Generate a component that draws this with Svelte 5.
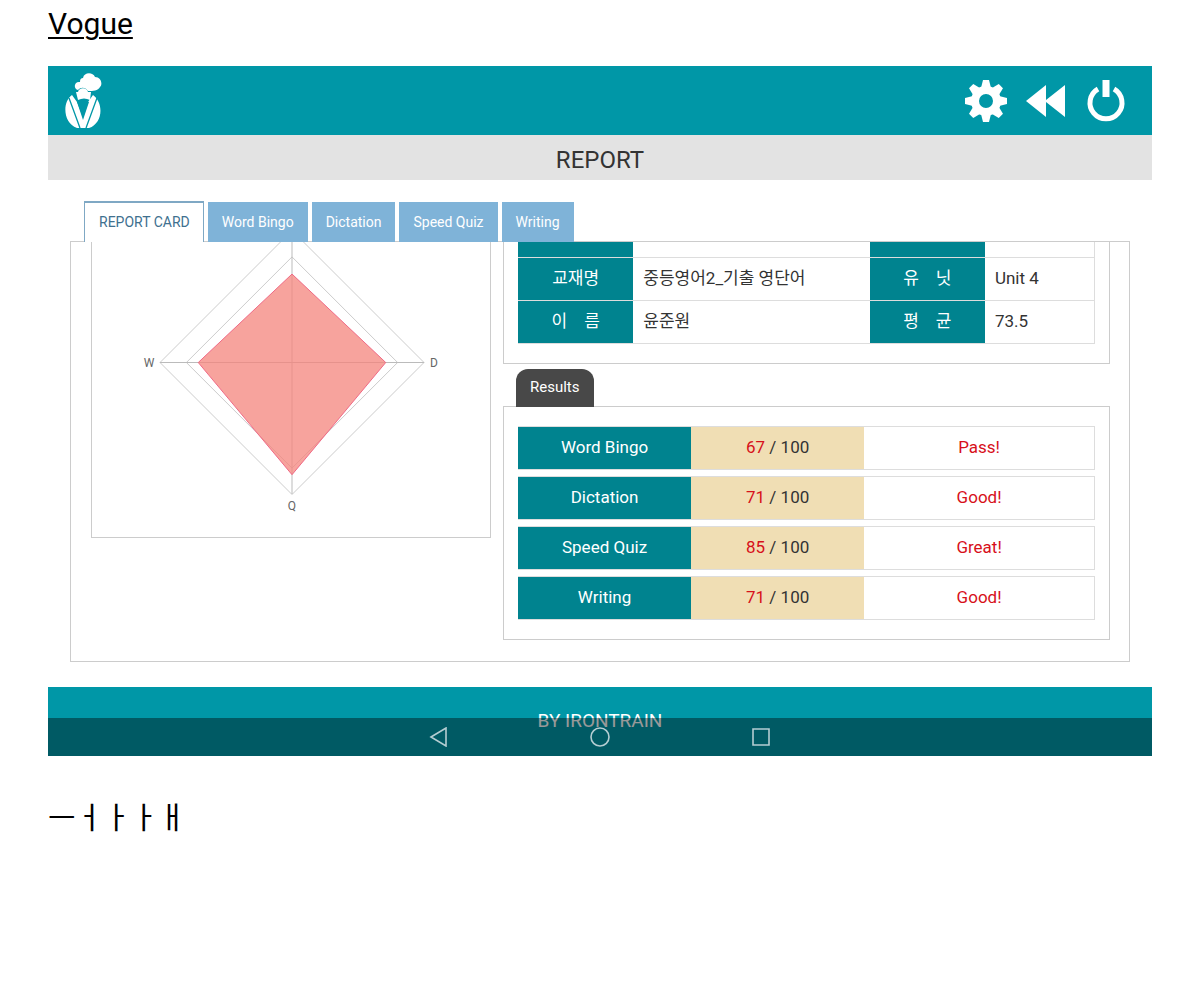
<script>

    const tabs = ['REPORT CARD', 'Word Bingo', 'Dictation', 'Speed Quiz', 'Writing'];
    let activeTab = 'REPORT CARD';

    const info = [
        ['교재명', '중등영어2_기출 영단어', '유\u3000닛', 'Unit 4'],
        ['이\u3000름', '윤준원', '평\u3000균', '73.5'],
    ];

    const results = [
        { name: 'Word Bingo', score: 67, grade: 'Pass!' },
        { name: 'Dictation', score: 71, grade: 'Good!' },
        { name: 'Speed Quiz', score: 85, grade: 'Great!' },
        { name: 'Writing', score: 71, grade: 'Good!' },
    ];

    const total = 100;
    const radius = 132;
    const center = { x: 200, y: 120.5 };

    // corners of a diamond, clockwise from the top
    function diamond(scores) {
        const [top, right, bottom, left] = scores.map((score) => score / total * radius);
        return [
            [center.x, center.y - top],
            [center.x + right, center.y],
            [center.x, center.y + bottom],
            [center.x - left, center.y],
        ].join(' ');
    }

</script>

<h1>Vogue</h1>

<div class="screen">
    <header>
        <a class="logo" href="/" aria-label="Home">
            <svg viewBox="0 0 38 56" width="38" height="56" fill="#fff">
                <path d="M14 17c-5-1-4-9 2-8 0-3 1-4 3-4 1-6 10-6 12-1 6 0 8 7 5 10-2 4-7 4-12 4-3-4-7-4-10-1z" />
                <path d="M14 19c1-5 9-5 10 0l3 0-1 8c-4-2-8-2-12 0l-2-8z" />
                <path d="M8 22C-2 29-1 50 13 55h12c14-5 15-25 4-33l-5 7-5 15-6-15z" />
                <path d="M13 29c4-2 8-2 12 0l-6 18z" fill="#0097a7" />
                <path d="m5 25 11 30M33 25 22 55" fill="none" stroke="#0097a7" stroke-width="1.3" />
            </svg>
        </a>
        <div class="actions">
            <button aria-label="Settings">
                <svg viewBox="0 0 42 42" width="42" height="42">
                    <circle cx="21" cy="21" r="11" fill="none" stroke="#fff" stroke-width="8" />
                    {#each [0, 45, 90, 135, 180, 225, 270, 315] as angle}
                        <path d="M16 8 18 0h6l2 8z" fill="#fff" transform="rotate({angle} 21 21)" />
                    {/each}
                </svg>
            </button>
            <button aria-label="Back">
                <svg viewBox="0 0 42 42" width="42" height="42">
                    <path d="M1 21 21 5v15L40 5v32L21 22v15z" fill="#fff" />
                </svg>
            </button>
            <button aria-label="Power">
                <svg viewBox="0 0 42 42" width="42" height="42" fill="none" stroke="#fff">
                    <path d="M13 9a16 16 0 1 0 16 0" stroke-width="5" />
                    <path d="M21 0v17" stroke-width="7" />
                </svg>
            </button>
        </div>
    </header>

    <h2>REPORT</h2>

    <main>
        <nav class="tabs">
            {#each tabs as tab}
                <button class:active={tab === activeTab} on:click={() => activeTab = tab}>{tab}</button>
            {/each}
        </nav>

        <div class="card">
            <div class="chart">
                <svg viewBox="0 0 398 295" role="img" aria-label="Scores">
                    <g fill="none" stroke="#ccc">
                        <polygon points={diamond([100, 100, 100, 100])} />
                        <polygon points={diamond([80, 80, 80, 80])} />
                    </g>
                    <path d="M68 120.5H332M200 0V252" stroke="#bbb" />
                    <polygon class="scores" points={diamond(results.map((result) => result.score))} />
                    <text x="57" y="125">W</text>
                    <text x="342" y="125">D</text>
                    <text x="200" y="268">Q</text>
                </svg>
            </div>

            <div class="details">
                <div class="box info">
                    <table>
                        <tbody>
                            <tr class="cut"><th></th><td></td><th></th><td></td></tr>
                            {#each info as row}
                                <tr>
                                    <th>{row[0]}</th>
                                    <td>{row[1]}</td>
                                    <th>{row[2]}</th>
                                    <td>{row[3]}</td>
                                </tr>
                            {/each}
                        </tbody>
                    </table>
                </div>

                <h3>Results</h3>
                <div class="box results">
                    <table>
                        <tbody>
                            {#each results as result}
                                <tr>
                                    <th>{result.name}</th>
                                    <td class="score"><span>{result.score}</span> / {total}</td>
                                    <td class="grade">{result.grade}</td>
                                </tr>
                            {/each}
                        </tbody>
                    </table>
                </div>
            </div>
        </div>
    </main>

    <footer>
        BY IRONTRAIN
        <div class="system">
            <button aria-label="System back">
                <svg viewBox="0 0 20 20" width="20" height="20"><path d="M2 10 17 1v18z" /></svg>
            </button>
            <button aria-label="System home">
                <svg viewBox="0 0 20 20" width="20" height="20"><circle cx="10" cy="10" r="9" /></svg>
            </button>
            <button aria-label="Recent apps">
                <svg viewBox="0 0 20 20" width="20" height="20"><path d="M2 2h16v16H2z" /></svg>
            </button>
        </div>
    </footer>
</div>

<p class="caption">ㅡㅓㅏㅏㅐ</p>

<style>
    :global(body) {
        background: #fff;
    }
    :global(#app) {
        padding: 0 48px;
        font-family: Roboto, 'Noto Sans CJK KR', sans-serif;
        color: #333;
    }
    h1, h2, h3, p {
        margin: 0;
        font-weight: 400;
    }
    h1 {
        padding: 6px 0 24px;
        color: #000;
        font-size: 30px;
        line-height: 36px;
        text-decoration: underline;
        text-decoration-thickness: 2px;
        text-underline-offset: 3px;
    }
    button {
        padding: 0;
        border: 0;
        background: none;
        font: inherit;
        cursor: pointer;
    }
    svg {
        display: block;
    }
    header {
        display: flex;
        align-items: center;
        justify-content: space-between;
        height: 69px;
        padding: 0 25px 0 16px;
        background: #0097a7;
    }
    .actions {
        display: flex;
        gap: 18px;
    }
    h2 {
        padding-top: 5px;
        background: #e3e3e3;
        font-size: 24px;
        line-height: 40px;
        text-align: center;
    }
    main {
        padding: 21px 22px 25px;
    }
    .tabs {
        display: flex;
        gap: 4px;
        align-items: flex-end;
        position: relative;
        z-index: 1;
        margin: 0 14px -1px;
    }
    .tabs button {
        height: 40px;
        padding: 0 14px;
        background: #7fb3d8;
        color: #fff;
        font-size: 14px;
    }
    .tabs button.active {
        height: 41px;
        padding: 0 13px 2px 14px;
        border: 1px solid #7fa8c4;
        border-top-width: 2px;
        border-bottom: 0;
        background: #fff;
        color: #40708f;
    }
    .card {
        display: flex;
        gap: 12px;
        align-items: flex-start;
        padding: 0 19px 21px 20px;
        border: 1px solid #ccc;
    }
    .chart {
        box-sizing: border-box;
        width: 400px;
        border: 1px solid #ccc;
        border-top: 0;
    }
    .chart text {
        fill: #666;
        font-size: 12px;
        text-anchor: middle;
    }
    .scores {
        fill: rgba(244, 132, 124, 0.75);
        stroke: #f06a86;
    }
    .details {
        flex: 1;
    }
    .box {
        border: 1px solid #ccc;
    }
    table {
        width: 100%;
        table-layout: fixed;
        font-size: 17px;
        line-height: 24px;
    }
    th, td {
        box-sizing: border-box;
        padding: 0 0 2px;
    }
    th {
        background: #00838f;
        color: #fff;
        font-weight: 400;
    }
    .info {
        padding: 0 14px 19px;
        border-top: 0;
    }
    .info table {
        border-collapse: collapse;
    }
    .info th, .info td {
        height: 43px;
        border-bottom: 1px solid #ddd;
    }
    .info td {
        width: 19%;
        padding-left: 10px;
    }
    .info th {
        width: 20%;
    }
    .info td:nth-child(2) {
        width: 41%;
    }
    .info td:last-child {
        border-right: 1px solid #ddd;
    }
    .info .cut th, .info .cut td {
        height: 15px;
    }
    h3 {
        width: fit-content;
        margin: 5px 0 -1px 13px;
        padding: 6px 14px 8px;
        border-radius: 12px 12px 0 0;
        background: #484848;
        color: #fff;
        font-size: 15px;
        line-height: 24px;
        position: relative;
    }
    .results {
        padding: 13px 14px;
    }
    .results table {
        border-collapse: separate;
        border-spacing: 0 6px;
        text-align: center;
    }
    .results th, .results td {
        width: 30%;
        height: 44px;
        border: 1px solid #ddd;
        border-width: 1px 0;
    }
    .results .score {
        background: #f0deb4;
    }
    .results .grade {
        width: 40%;
        border-right-width: 1px;
    }
    .score span, .grade {
        color: #d7101a;
    }
    footer {
        position: relative;
        height: 69px;
        background: #0097a7;
        color: #fff;
        font-size: 19px;
        line-height: 68px;
        text-align: center;
    }
    .system {
        position: absolute;
        inset: auto 0 0;
        display: flex;
        align-items: center;
        justify-content: center;
        gap: 141px;
        height: 38px;
        background: rgba(0, 0, 0, 0.4);
    }
    .system svg {
        fill: none;
        stroke: #b4cdd2;
        stroke-width: 1.6;
    }
    .caption {
        padding: 40px 0;
        color: #000;
        font-size: 30px;
        line-height: 44px;
    }
</style>
